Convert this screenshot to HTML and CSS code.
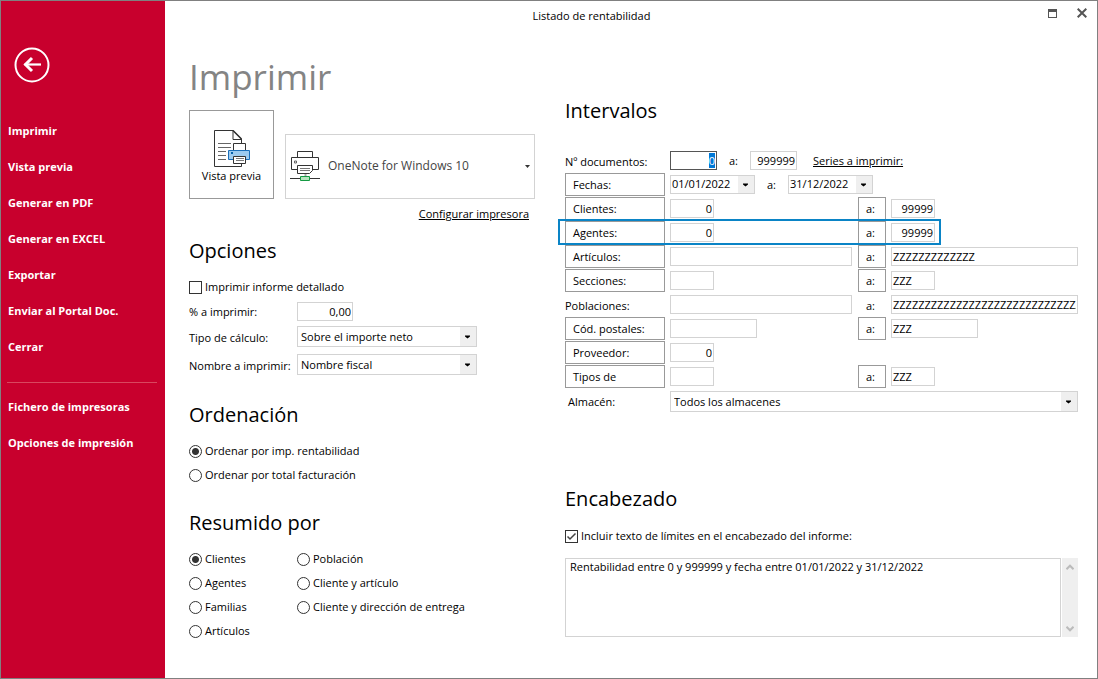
FILE: index.html
```html
<!DOCTYPE html>
<html lang="es">
<head>
<meta charset="utf-8">
<title>Listado de rentabilidad</title>
<link rel="stylesheet" href="styles.css">
</head>
<body>
<div class="window">
  <nav class="sidebar">
    <button class="back" type="button" aria-label="Volver">
      <svg width="36" height="36" viewBox="0 0 36 36" fill="none" stroke="#fff"><circle cx="18" cy="18" r="16.5" stroke-width="2"/><path d="M27 17.500H10.500" stroke-width="2.200"/><path d="M18 11l-6.500 6.500L18 24" stroke-width="3"/></svg>
    </button>
    <a class="nav-link" href="#">Imprimir</a>
    <a class="nav-link" href="#">Vista previa</a>
    <a class="nav-link" href="#">Generar en PDF</a>
    <a class="nav-link" href="#">Generar en EXCEL</a>
    <a class="nav-link" href="#">Exportar</a>
    <a class="nav-link" href="#">Enviar al Portal Doc.</a>
    <a class="nav-link" href="#">Cerrar</a>
    <hr class="nav-rule">
    <a class="nav-link" href="#">Fichero de impresoras</a>
    <a class="nav-link" href="#">Opciones de impresión</a>
  </nav>

  <main class="main">
    <header class="titlebar">
      <span class="title">Listado de rentabilidad</span>
      <button class="win-btn" type="button" aria-label="Maximizar"><svg width="9" height="9" viewBox="0 0 9 9" shape-rendering="crispEdges"><path d="M0 0h9v9H0z" fill="#555"/><path d="M1 3h7v5H1z" fill="#fff"/></svg></button>
      <button class="win-btn" type="button" aria-label="Cerrar ventana"><svg width="10" height="10" viewBox="0 0 10 10"><path d="M.7.700l8.600 8.600M9.300.700L.7 9.300" stroke="#555" stroke-width="2"/></svg></button>
    </header>

    <div class="columns">
      <div class="left">
        <h1 class="heading">Imprimir</h1>
        <div class="printer-row">
          <button class="preview" type="button">
            <svg width="37" height="39" viewBox="0 0 37 39" fill="none">
              <path d="M28.500 14V10L20 1.500H1.500v36h20" stroke="#333"/><path d="M20 1v9.500h8.500" stroke="#333"/><path d="M20 1.500l8.500 8.500" stroke="#333" stroke-width="1.500"/><path d="M28.500 34v3.500H18" stroke="#333"/>
              <path d="M5 14.500h13M5 18.500h13M5 22.500h8M5 26.500h8M5 30.500h8" stroke="#666"/>
              <path d="M20.500 14.500h12v7h-12z" fill="#fff" stroke="#333"/>
              <path d="M15.500 21.500h21v9h-21z" fill="#9ccbf0" stroke="#1a6fba"/><path d="M18 23h2v2h-2z" fill="#0563ad"/>
              <path d="M20.500 27.500h12v7h-12z" fill="#fff" stroke="#333"/><path d="M23 29.500h8M23 31.500h8" stroke="#777"/>
            </svg>
            <span>Vista previa</span>
          </button>
          <div class="printer">
            <svg class="printer-icon" width="31" height="32" viewBox="0 0 31 32" fill="none">
              <path d="M7.500 7V1.500h15V7" stroke="#333"/><path d="M7 19.500H1.500v-12h27v12H23" stroke="#333"/>
              <path d="M4.500 11h2v2h-2z" stroke="#666"/>
              <path d="M7.500 15.500h15v5l-3 3h-12z" fill="#fff" stroke="#333"/><path d="M10 18.500h10M10 20.500h10" stroke="#777"/>
              <path d="M15.500 24v3" stroke="#aaa" stroke-width="2"/><path d="M0 28.500h30" stroke="#333"/><path d="M10.500 26.500h9v4h-9z" fill="#b5e3bd" stroke="#159a43"/>
            </svg>
            <select class="printer-select" aria-label="Impresora"><option>OneNote for Windows 10</option></select>
          </div>
        </div>
        <a class="config-link" href="#">Configurar impresora</a>

        <section class="section options">
          <h2 class="subheading">Opciones</h2>
          <label class="choice"><input type="checkbox">Imprimir informe detallado</label>
          <div class="form-grid">
            <label for="pct">% a imprimir:</label><input id="pct" class="field pct num" value="0,00">
            <label for="calc">Tipo de cálculo:</label><select id="calc" class="combo"><option>Sobre el importe neto</option></select>
            <label for="name">Nombre a imprimir:</label><select id="name" class="combo"><option>Nombre fiscal</option></select>
          </div>
        </section>

        <section class="section">
          <h2 class="subheading">Ordenación</h2>
          <label class="choice"><input type="radio" name="orden" checked>Ordenar por imp. rentabilidad</label>
          <label class="choice"><input type="radio" name="orden">Ordenar por total facturación</label>
        </section>

        <section class="section">
          <h2 class="subheading">Resumido por</h2>
          <div class="choice-grid">
            <label class="choice"><input type="radio" name="resumen" checked>Clientes</label>
            <label class="choice"><input type="radio" name="resumen">Población</label>
            <label class="choice"><input type="radio" name="resumen">Agentes</label>
            <label class="choice"><input type="radio" name="resumen">Cliente y artículo</label>
            <label class="choice"><input type="radio" name="resumen">Familias</label>
            <label class="choice"><input type="radio" name="resumen">Cliente y dirección de entrega</label>
            <label class="choice"><input type="radio" name="resumen">Artículos</label>
          </div>
        </section>
      </div>

      <div class="right">
        <h2 class="subheading">Intervalos</h2>
        <div class="ranges">
          <div class="row">
            <label class="row-label" for="doc1">Nº documentos:</label>
            <div class="inline docs"><input id="doc1" class="field doc num active" value="0"><label for="doc2">a:</label><input id="doc2" class="field doc num" value="999999"><a class="series" href="#">Series a imprimir:</a></div>
          </div>
          <div class="row">
            <button class="box" type="button">Fechas:</button>
            <div class="inline dates"><select class="combo date" aria-label="Fecha inicial"><option>01/01/2022</option></select><span>a:</span><select class="combo date" aria-label="Fecha final"><option>31/12/2022</option></select></div>
          </div>
          <div class="row">
            <button class="box" type="button">Clientes:</button><input class="field short num" value="0" aria-label="Cliente inicial">
            <button class="box to" type="button">a:</button><input class="field short num" value="99999" aria-label="Cliente final">
          </div>
          <div class="row marked">
            <button class="box" type="button">Agentes:</button><input class="field short num" value="0" aria-label="Agente inicial">
            <button class="box to" type="button">a:</button><input class="field short num" value="99999" aria-label="Agente final">
          </div>
          <div class="row">
            <button class="box" type="button">Artículos:</button><input class="field long" aria-label="Artículo inicial">
            <button class="box to" type="button">a:</button><input class="field" value="ZZZZZZZZZZZZZ" aria-label="Artículo final">
          </div>
          <div class="row">
            <button class="box" type="button">Secciones:</button><input class="field short" aria-label="Sección inicial">
            <button class="box to" type="button">a:</button><input class="field short" value="ZZZ" aria-label="Sección final">
          </div>
          <div class="row">
            <label class="row-label" for="pob1">Poblaciones:</label><input id="pob1" class="field long">
            <label class="to-text" for="pob2">a:</label><input id="pob2" class="field" value="ZZZZZZZZZZZZZZZZZZZZZZZZZZZZZZZZZZZ">
          </div>
          <div class="row">
            <button class="box" type="button">Cód. postales:</button><input class="field medium" aria-label="Código postal inicial">
            <button class="box to" type="button">a:</button><input class="field medium" value="ZZZ" aria-label="Código postal final">
          </div>
          <div class="row">
            <button class="box" type="button">Proveedor:</button><input class="field short num" value="0" aria-label="Proveedor">
          </div>
          <div class="row">
            <button class="box" type="button">Tipos de</button><input class="field short" aria-label="Tipo inicial">
            <button class="box to" type="button">a:</button><input class="field short" value="ZZZ" aria-label="Tipo final">
          </div>
          <div class="row store">
            <label class="row-label" for="alm">Almacén:</label><select id="alm" class="combo store-select"><option>Todos los almacenes</option></select>
          </div>
        </div>

        <section class="header-section">
          <h2 class="subheading">Encabezado</h2>
          <label class="choice"><input type="checkbox" checked>Incluir texto de límites en el encabezado del informe:</label>
          <div class="memo">
            <textarea class="memo-text" aria-label="Texto del encabezado">Rentabilidad entre 0 y 999999 y fecha entre 01/01/2022 y 31/12/2022</textarea>
            <div class="scrollbar" aria-hidden="true">
              <svg width="8" height="6" viewBox="0 0 8 6"><path d="M.5 5.200L4 1.700l3.500 3.500" fill="none" stroke="#bbb" stroke-width="2"/></svg>
              <svg width="8" height="6" viewBox="0 0 8 6"><path d="M.5.800L4 4.300 7.500.800" fill="none" stroke="#bbb" stroke-width="2"/></svg>
            </div>
          </div>
        </section>
      </div>
    </div>
  </main>
</div>
<script src="main.js"></script>
</body>
</html>
```

FILE: styles.css
```css
*, *::before { box-sizing: border-box; }
body { margin: 0; font: 11px/16px "Open Sans", "Noto Sans", sans-serif; color: #000; }
button, input, select, textarea { font: inherit; color: inherit; margin: 0; border-radius: 0; }
a { color: inherit; }
h1, h2 { margin: 0; font-weight: 400; }
svg { display: block; }

.window { display: flex; min-height: 100vh; border: 1px solid #808080; background: #fff; }

.sidebar { flex: 0 0 164px; display: flex; flex-direction: column; padding: 46px 8px 20px 7px; background: #c8002d; color: #fff; }
.back { align-self: flex-start; margin: 0 0 30px 6px; padding: 0; border: 0; background: none; }
.nav-link { height: 36px; line-height: 36px; font-weight: 700; text-decoration: none; white-space: nowrap; }
.nav-rule { width: 150px; margin: 17px 0 6px -1px; border: 0; border-top: 1px solid #d9475f; }

.main { flex: 1; min-width: 0; }
.titlebar { display: flex; align-items: center; gap: 20px; height: 24px; padding-right: 10px; }
.title { flex: 1; padding: 6px 10px 0 0; text-align: center; }
.win-btn { padding: 0; border: 0; background: none; }

.columns { display: flex; gap: 30px; padding: 0 19px 0 24px; }
.left { flex: 0 0 346px; }
.right { flex: 1; min-width: 0; padding-top: 70px; }

.heading { padding-top: 24px; height: 85px; font-size: 35px; line-height: 56px; color: #848484; }
.subheading { font-size: 20px; line-height: 32px; }

.printer-row { display: flex; justify-content: space-between; align-items: flex-end; }
.preview { display: flex; flex-direction: column; align-items: center; width: 85px; height: 89px; padding: 18px 0 0; border: 1px solid #999; background: #fff; white-space: nowrap; }
.printer { position: relative; width: 250px; height: 65px; }
.printer-icon { position: absolute; left: 5px; top: 16px; }
.printer-select { width: 100%; height: 100%; padding: 0 20px 1px 42px; appearance: none; border: 1px solid #d3d3d3; color: #444; font-size: 12px; background: url("data:image/svg+xml,%3Csvg xmlns='http://www.w3.org/2000/svg' width='5' height='3'%3E%3Cpath d='M0 0h5L2.500 3z' fill='%23333'/%3E%3C/svg%3E") no-repeat right 4px center; }
.config-link { display: block; margin: 7px 6px 0 0; text-align: right; }

.section { margin-top: 20px; }
.options { height: 144px; margin-top: 13px; }
.subheading + .choice, .choice-grid { margin-top: 8px; }
.choice { display: flex; align-items: center; gap: 3px; height: 24px; white-space: nowrap; }
.choice-grid { display: grid; grid-template-columns: 108px 1fr; }
.choice input { flex: none; width: 13px; height: 13px; appearance: none; border: 1px solid #333; background: #fff; }
.choice input[type="radio"] { border-radius: 50%; }
.choice input[type="radio"]:checked { background: radial-gradient(circle, #333 3px, #fff 4px); }
.choice input[type="checkbox"]:checked { background: url("data:image/svg+xml,%3Csvg xmlns='http://www.w3.org/2000/svg' width='11' height='11'%3E%3Cpath d='M1.500 5.500L4 8l5.500-5.500' fill='none' stroke='%23444' stroke-width='1.500'/%3E%3C/svg%3E") center no-repeat; }
.form-grid { display: grid; grid-template-columns: 108px 180px; row-gap: 5px; align-items: center; margin-top: 3px; white-space: nowrap; }

.field { width: 100%; min-width: 0; height: 19px; padding: 0 1px 1px; border: 1px solid #d3d3d3; background: #fff; outline: 0; }
.num { text-align: right; }
.pct { width: 56px; }
.short { width: 44px; }
.medium { width: 87px; }
.long { width: 182px; }
.doc { width: 47px; }
.active { border-color: #555; }
.active::selection { background: #0078d7; color: #fff; }

.combo { width: 100%; height: 21px; padding: 0 20px 0 3px; appearance: none; border: 1px solid #d3d3d3; outline: 0; background: url("data:image/svg+xml,%3Csvg xmlns='http://www.w3.org/2000/svg' width='16' height='40'%3E%3Cpath d='M0 0h16v40H0z' fill='%23efefef'/%3E%3Cpath d='M5 19h5v1L7.500 22 5 20z'/%3E%3C/svg%3E") no-repeat right center #fff; }
.form-grid .combo { margin-bottom: 2px; }
.date { width: 85px; height: 19px; padding: 0 18px 1px 1px; }

.ranges { display: grid; row-gap: 1px; padding-top: 22px; }
.row { position: relative; display: grid; grid-template-columns: 100px 183px 28px minmax(0, 1fr); column-gap: 5px; align-items: center; height: 23px; }
.row-label { padding-top: 2px; white-space: nowrap; }
.box { height: 23px; padding: 0 0 0 7px; border: 1px solid #999; background: #fff; text-align: left; white-space: nowrap; }
.to-text { padding: 2px 0 0 8px; }
.marked::before { content: ""; position: absolute; z-index: 1; left: -7px; top: -2px; width: 383px; height: 26px; border: 2px solid #0a84c6; pointer-events: none; }
.inline { grid-column: 2 / -1; display: flex; align-items: center; gap: 12px; white-space: nowrap; }
.series { margin-left: 4px; }
.store-select { grid-column: 2 / -1; }
.store { margin-top: 1px; }
.store .row-label { padding: 0 0 0 3px; }

.header-section { margin-top: 70px; }
.header-section .subheading + .choice { margin-top: 9px; }
.memo { display: flex; gap: 1px; height: 79px; margin-top: 10px; }
.memo-text { flex: 1; min-width: 0; padding: 0 4px; resize: none; border: 1px solid #d3d3d3; outline: 0; overflow: hidden; }
.scrollbar { display: flex; flex-direction: column; justify-content: space-between; align-items: center; width: 16px; padding: 6px 0 5px; background: #efefef; }
```

FILE: main.js
```js
document.getElementById("doc1").select();
```
